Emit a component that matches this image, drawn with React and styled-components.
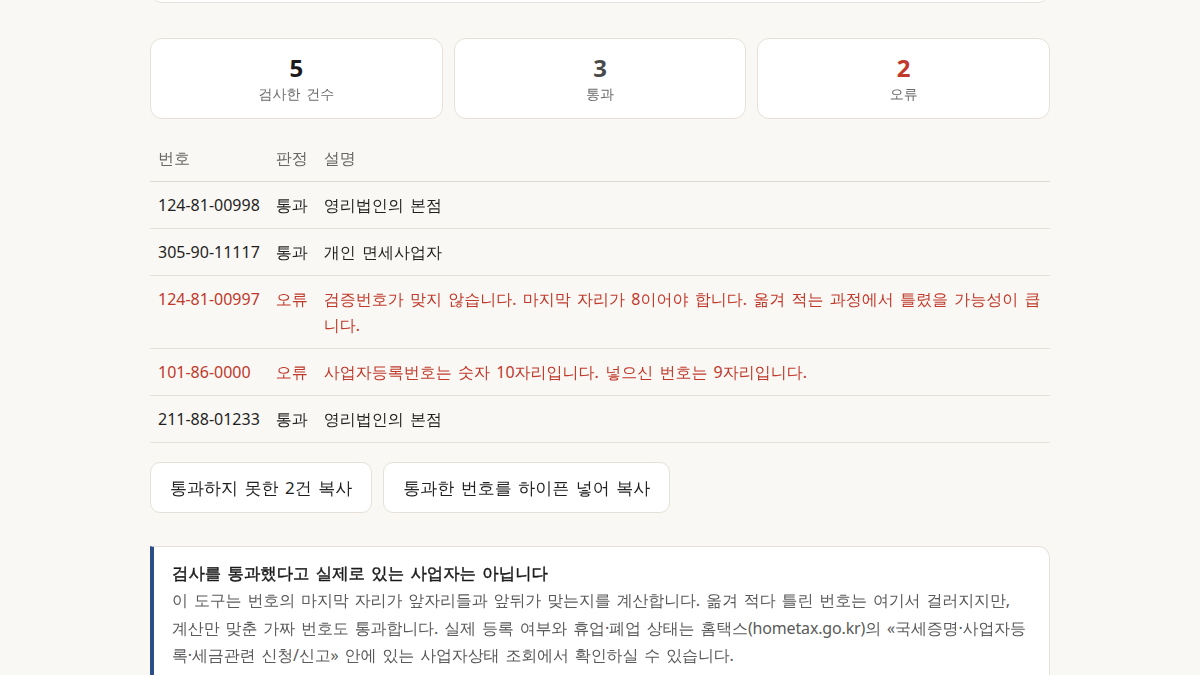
import React from "react";
import styled, { createGlobalStyle } from "styled-components";

const GlobalStyle = createGlobalStyle`
  html, body {
    margin: 0;
    padding: 0;
    background: #faf8f4;
    color: #1f1f1f;
    font-family: "Noto Sans", "WenQuanYi Zen Hei", "Noto Sans CJK KR", sans-serif;
    word-spacing: 0.13em;
    overflow: hidden;
  }
`;

const Page = styled.main`
  width: 900px;
  margin: 0 auto;
  display: flex;
  flex-direction: column;
`;

const InputBox = styled.div`
  height: 120px;
  margin-top: -119px;
  background: #fff;
  border: 1px solid #e6e1d8;
  border-radius: 12px;
`;

const Stats = styled.section`
  display: grid;
  grid-template-columns: repeat(3, 1fr);
  gap: 11px;
  margin-top: 35px;
`;

const StatCard = styled.div`
  background: #fff;
  border: 1px solid #e6e1d8;
  border-radius: 12px;
  height: 79px;
  display: flex;
  flex-direction: column;
  align-items: center;
  justify-content: center;
`;

const StatNumber = styled.div`
  font-size: 24px;
  font-weight: 700;
  line-height: 30px;
  color: ${({ $tone }) =>
    $tone === "error" ? "#c0392b" : $tone === "pass" ? "#4a4a4a" : "#1a1a1a"};
`;

const StatLabel = styled.div`
  font-size: 14px;
  line-height: 22px;
  color: #6b6b6b;
`;

const Table = styled.table`
  width: 100%;
  border-collapse: collapse;
  margin-top: 16px;
  font-size: 16px;
`;

const Th = styled.th`
  text-align: left;
  font-weight: 400;
  color: #666;
  padding: 10px 8px;
  line-height: 26px;
  white-space: nowrap;
  border-bottom: 1px solid #dedbd5;
  width: ${({ $grow }) => ($grow ? "100%" : "auto")};
`;

const Row = styled.tr`
  color: ${({ $error }) => ($error ? "#c0392b" : "#1f1f1f")};
  border-bottom: 1px solid #e4e1db;
`;

const Td = styled.td`
  padding: 10px 8px;
  line-height: 26px;
  vertical-align: top;
  white-space: ${({ $wrap }) => ($wrap ? "normal" : "nowrap")};
`;

const Actions = styled.div`
  display: flex;
  gap: 11px;
  margin-top: 19px;
`;

const Button = styled.button`
  font-family: inherit;
  word-spacing: inherit;
  font-size: 17px;
  color: #1f1f1f;
  background: #fff;
  border: 1px solid #e6e1d8;
  border-radius: 10px;
  height: 51px;
  padding: 0 19px;
  cursor: pointer;
`;

const Note = styled.aside`
  margin-top: 33px;
  background: #fff;
  border: 1px solid #e6e1d8;
  border-left: 4px solid #2b4f86;
  border-radius: 0 12px 12px 0;
  padding: 14px 20px 16px 18px;
`;

const NoteTitle = styled.strong`
  display: block;
  font-size: 16.4px;
  font-weight: 700;
  line-height: 24px;
  color: #1a1a1a;
  -webkit-text-stroke: 0.45px #1a1a1a;
`;

const NoteBody = styled.p`
  margin: 2px 0 0;
  font-size: 16px;
  line-height: 27.5px;
  letter-spacing: -0.16px;
  color: #5a5a5a;
`;

const rows = [
  { no: "124-81-00998", ok: true, desc: "영리법인의 본점" },
  { no: "305-90-11117", ok: true, desc: "개인 면세사업자" },
  {
    no: "124-81-00997",
    ok: false,
    desc: "검증번호가 맞지 않습니다. 마지막 자리가 8이어야 합니다. 옮겨 적는 과정에서 틀렸을 가능성이 큽니다.",
  },
  {
    no: "101-86-0000",
    ok: false,
    desc: "사업자등록번호는 숫자 10자리입니다. 넣으신 번호는 9자리입니다.",
  },
  { no: "211-88-01233", ok: true, desc: "영리법인의 본점" },
];

export default function App() {
  return (
    <>
      <GlobalStyle />
      <Page>
        <InputBox />
        <Stats>
          <StatCard>
            <StatNumber>5</StatNumber>
            <StatLabel>검사한 건수</StatLabel>
          </StatCard>
          <StatCard>
            <StatNumber $tone="pass">3</StatNumber>
            <StatLabel>통과</StatLabel>
          </StatCard>
          <StatCard>
            <StatNumber $tone="error">2</StatNumber>
            <StatLabel>오류</StatLabel>
          </StatCard>
        </Stats>
        <Table>
          <thead>
            <tr>
              <Th>번호</Th>
              <Th>판정</Th>
              <Th $grow>설명</Th>
            </tr>
          </thead>
          <tbody>
            {rows.map((r) => (
              <Row key={r.no} $error={!r.ok}>
                <Td>{r.no}</Td>
                <Td>{r.ok ? "통과" : "오류"}</Td>
                <Td $wrap>{r.desc}</Td>
              </Row>
            ))}
          </tbody>
        </Table>
        <Actions>
          <Button>통과하지 못한 2건 복사</Button>
          <Button>통과한 번호를 하이픈 넣어 복사</Button>
        </Actions>
        <Note>
          <NoteTitle>검사를 통과했다고 실제로 있는 사업자는 아닙니다</NoteTitle>
          <NoteBody>
            이 도구는 번호의 마지막 자리가 앞자리들과 앞뒤가 맞는지를 계산합니다. 옮겨 적다 틀린
            번호는 여기서 걸러지지만, 계산만 맞춘 가짜 번호도 통과합니다. 실제 등록 여부와
            휴업·폐업 상태는 홈택스(hometax.go.kr)의 «국세증명·사업자등록·세금관련 신청/신고» 안에
            있는 사업자상태 조회에서 확인하실 수 있습니다.
          </NoteBody>
        </Note>
      </Page>
    </>
  );
}
